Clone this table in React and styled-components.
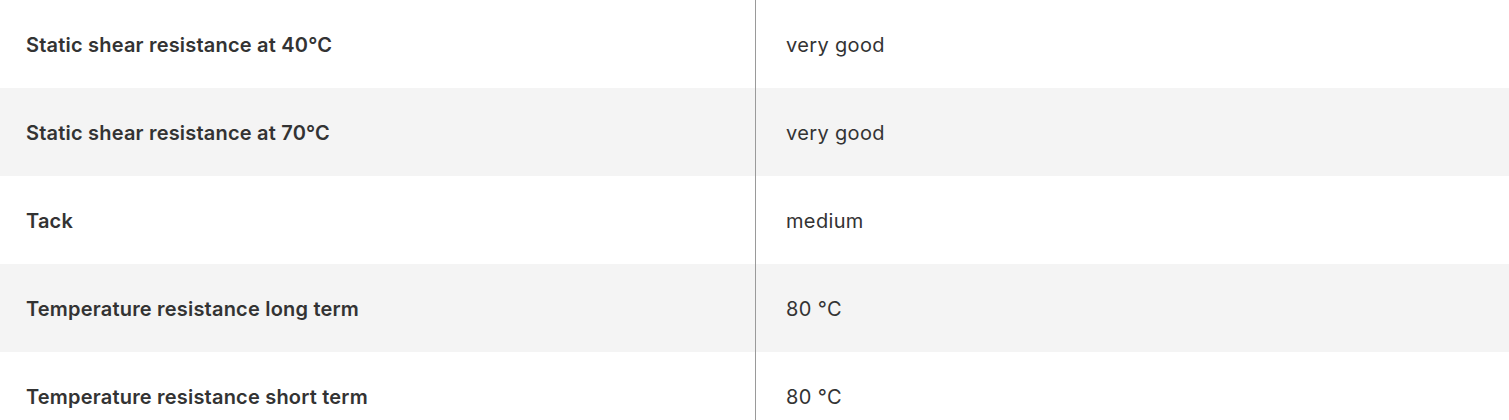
import React from "react";
import styled, { createGlobalStyle } from "styled-components";

const GlobalStyle = createGlobalStyle`
	body {
		margin: 0;
		background: #fff;
		font-family: Inter, "Liberation Sans", sans-serif;
	}
`;

const rows = [
	["Static shear resistance at 40°C", "very good"],
	["Static shear resistance at 70°C", "very good"],
	["Tack", "medium"],
	["Temperature resistance long term", "80 °C"],
	["Temperature resistance short term", "80 °C"],
];

const App = () => {
	return (
		<>
			<GlobalStyle />
			<Table>
				{rows.map(([label, value], i) => (
					<Row key={label} striped={i % 2 === 1}>
						<Label>{label}</Label>
						<Value>{value}</Value>
					</Row>
				))}
			</Table>
		</>
	);
};

const Table = styled.div`
	display: flex;
	flex-direction: column;
	width: 1509px;
`;

const Row = styled.div.withConfig({
	shouldForwardProp: (prop) => prop !== "striped",
})`
	display: grid;
	grid-template-columns: 756px 1fr;
	height: 88px;
	background-color: ${(props) => (props.striped ? "#f4f4f4" : "#fff")};
	color: #333;
`;

const Label = styled.div`
	display: flex;
	align-items: center;
	padding: 2px 0 0 26px;
	border-right: 1px solid #9a9a9a;
	font-size: 20px;
	font-weight: 600;
	letter-spacing: 0.2px;
`;

const Value = styled.div`
	display: flex;
	align-items: center;
	padding: 2px 0 0 30px;
	font-size: 20px;
	font-weight: 400;
	letter-spacing: 0.35px;
`;

export default App;
